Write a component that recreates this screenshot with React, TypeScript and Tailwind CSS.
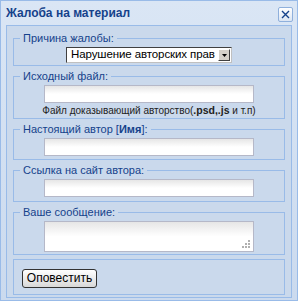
import React from "react";

function Legend({ children }: { children: React.ReactNode }) {
  return (
    <legend className="ml-0 px-[3px] text-[11px] leading-[13px] text-[#15428b]">{children}</legend>
  );
}

function TextBox() {
  return (
    <div className="mx-auto h-[18px] w-[210px] border border-[#b5b8c8] bg-gradient-to-b from-[#e6e6e6] via-white to-white"></div>
  );
}

export default function App() {
  return (
    <div
      className="w-[299px] h-[304px] bg-white"
      style={{ fontFamily: '"Liberation Sans", Arial, sans-serif' }}
    >
      <div className="w-[298px] h-[301px] border border-[#99bbe8] bg-gradient-to-b from-[#dae6f5] to-[#cbdaee] flex flex-col">
        {/* title bar */}
        <div className="h-[24px] flex items-center justify-between pl-[5px] pr-[4px]">
          <span className="text-[12px] font-bold text-[#15428b] leading-none">Жалоба на материал</span>
          <button className="w-[15px] h-[15px] mt-[2px] flex items-center justify-center rounded-[2px] border border-[#8fb0dc] bg-gradient-to-b from-white to-[#dbe5f3]">
            <svg width="11" height="11" viewBox="0 0 11 11">
              <path d="M2 2 L9 9 M9 2 L2 9" stroke="#15428b" strokeWidth="1.4" fill="none" />
            </svg>
          </button>
        </div>

        {/* body panel */}
        <div className="ml-[5px] mr-[5px] w-[286px] h-[273px] border border-[#99bbe8] bg-[#cad9ec] px-[6px] pt-[6px] flex flex-col gap-[4px]">
          <fieldset className="border border-[#99bbe8] px-[6px] pt-[2px] pb-[2px]">
            <Legend>Причина жалобы:</Legend>
            <div className="mx-auto flex h-[16px] w-[166px] items-center overflow-hidden border border-t-[#404040] border-l-[#404040] border-b-[#c0c0c0] border-r-[#c0c0c0] bg-white">
              <span className="min-w-0 flex-1 overflow-hidden pl-[4px] text-[11.5px] tracking-[-0.1px] leading-none text-black whitespace-nowrap">Нарушение авторских прав</span>
              <span className="mr-[1px] flex h-[12px] w-[12px] shrink-0 items-center justify-center border border-t-white border-l-white border-b-[#404040] border-r-[#404040] bg-[#d4d0c8]">
                <svg width="5" height="3" viewBox="0 0 5 3">
                  <path d="M0 0 H5 L2.5 3 Z" fill="#000" />
                </svg>
              </span>
            </div>
          </fieldset>

          <fieldset className="border border-[#99bbe8] px-[6px] pt-[2px] pb-[1px]">
            <Legend>Исходный файл:</Legend>
            <TextBox />
            <div className="mt-[1px] text-center text-[10px] leading-[13px] text-[#222] whitespace-nowrap">
              Файл доказывающий авторство(<b className="text-[10.5px]">.psd,.js</b> и т.п)
            </div>
          </fieldset>

          <fieldset className="border border-[#99bbe8] px-[6px] pt-[2px] pb-[3px]">
            <Legend>
              Настоящий автор [<b>Имя</b>]:
            </Legend>
            <TextBox />
          </fieldset>

          <fieldset className="border border-[#99bbe8] px-[6px] pt-[2px] pb-[4px]">
            <Legend>Ссылка на сайт автора:</Legend>
            <TextBox />
          </fieldset>

          <fieldset className="border border-[#99bbe8] px-[6px] pt-[2px] pb-[2px]">
            <Legend>Ваше сообщение:</Legend>
            <div className="relative mx-auto h-[31px] w-[210px] border border-[#b5b8c8] bg-gradient-to-b from-[#e6e6e6] via-white to-white">
              <svg className="absolute right-[3px] bottom-[3px]" width="8" height="8" viewBox="0 0 8 8">
                <rect x="6" y="0" width="2" height="2" fill="#b0b0b0" />
                <rect x="3" y="3" width="2" height="2" fill="#b0b0b0" />
                <rect x="6" y="3" width="2" height="2" fill="#b0b0b0" />
                <rect x="0" y="6" width="2" height="2" fill="#b0b0b0" />
                <rect x="3" y="6" width="2" height="2" fill="#b0b0b0" />
                <rect x="6" y="6" width="2" height="2" fill="#b0b0b0" />
              </svg>
            </div>
          </fieldset>

          <fieldset className="border border-[#99bbe8] pl-[8px] pt-[5px] pb-[5px]">
            <button className="h-[19px] w-[75px] rounded-[3px] border border-[#333] bg-gradient-to-b from-white to-[#d8d8d8] text-[12px] leading-none text-black">
              Оповестить
            </button>
          </fieldset>
        </div>
      </div>
    </div>
  );
}
